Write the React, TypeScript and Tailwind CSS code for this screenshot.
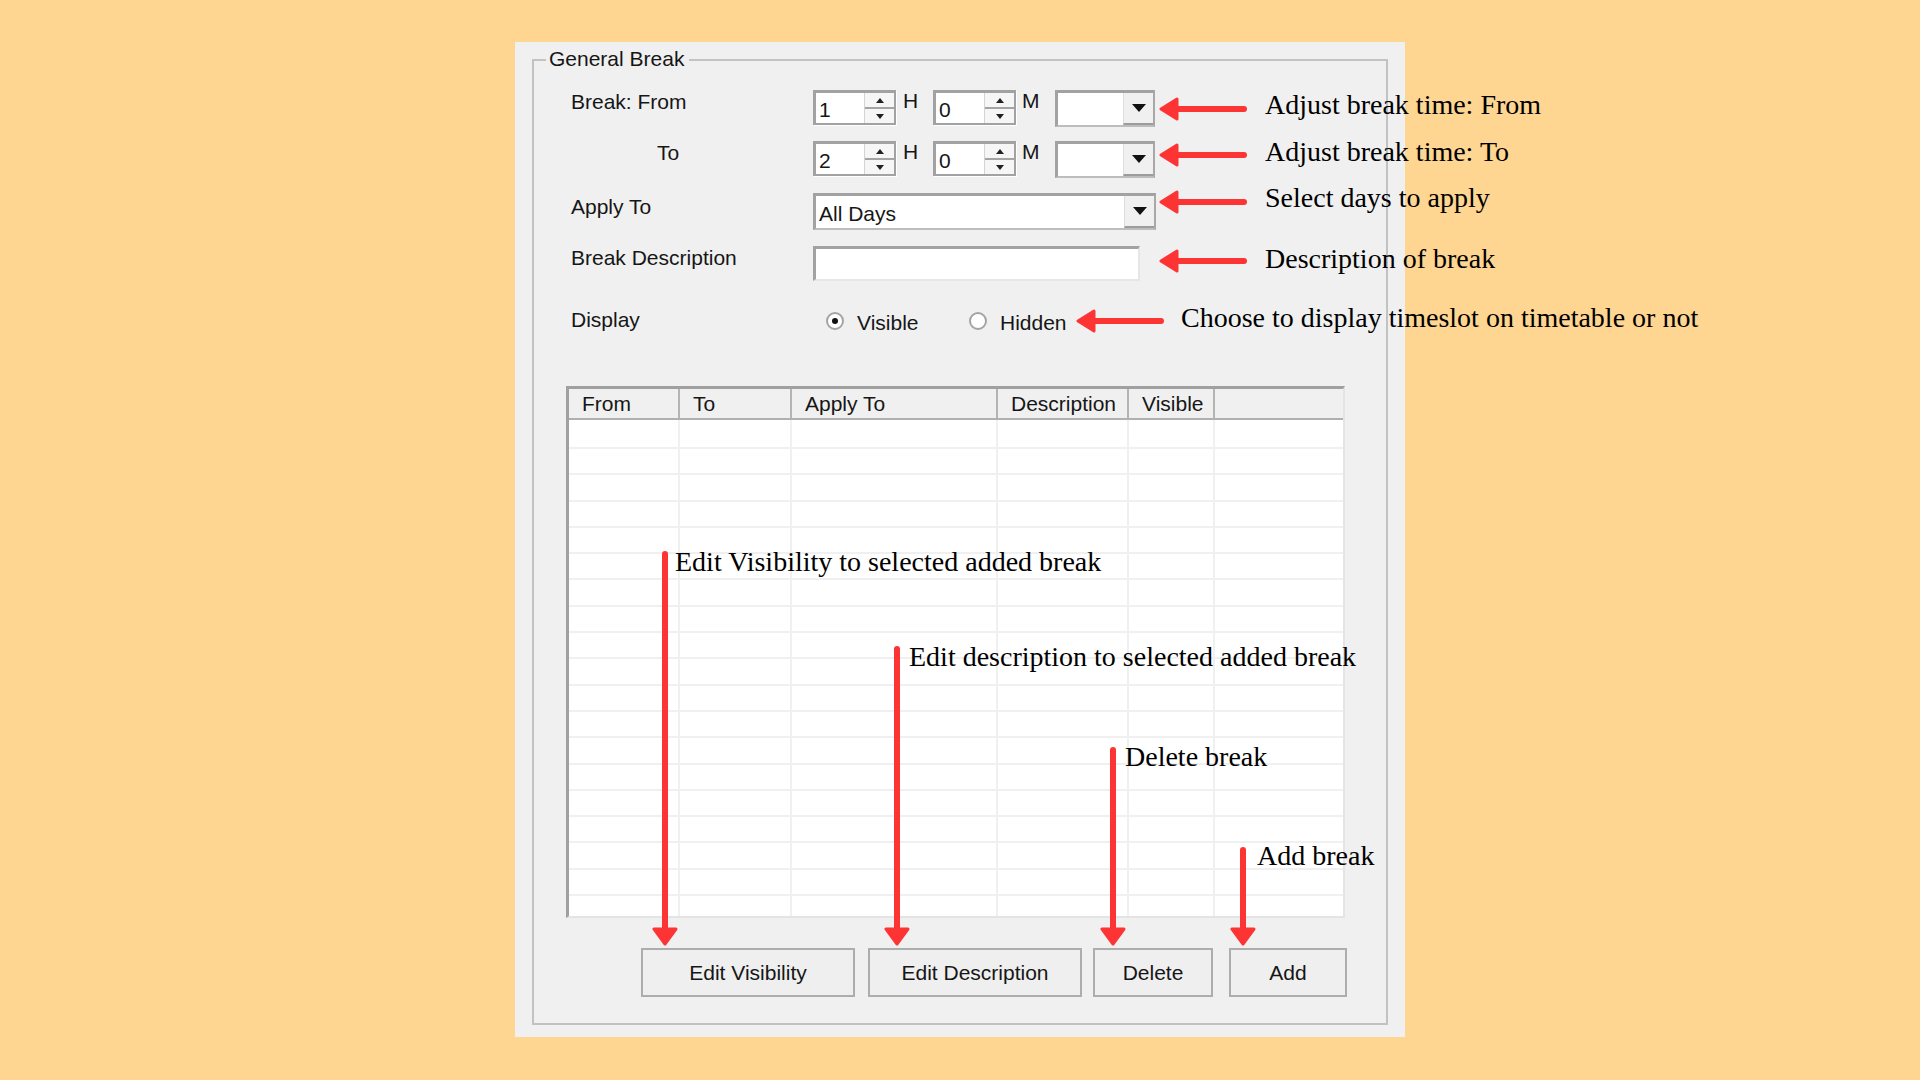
import React from 'react';

const RED = '#fd3434';

function HArrow({ x, y }: { x: number; y: number }) {
  // tip on the left, tail on the right
  return (
    <svg className="absolute" style={{ left: x, top: y - 13 }} width="90" height="26" viewBox="0 0 90 26">
      <line x1="14" y1="13" x2="85" y2="13" stroke={RED} strokeWidth="6" strokeLinecap="round" />
      <path d="M2 13 L18 3 L18 23 Z" fill={RED} stroke={RED} strokeWidth="3" strokeLinejoin="round" />
    </svg>
  );
}

function VArrow({ x, top, tip }: { x: number; top: number; tip: number }) {
  const h = tip - top;
  return (
    <svg className="absolute" style={{ left: x - 13, top }} width="26" height={h} viewBox={`0 0 26 ${h}`}>
      <line x1="13" y1="3" x2="13" y2={h - 12} stroke={RED} strokeWidth="6" strokeLinecap="round" />
      <path d={`M13 ${h - 2} L2 ${h - 17} L24 ${h - 17} Z`} fill={RED} stroke={RED} strokeWidth="3" strokeLinejoin="round" />
    </svg>
  );
}

function Note({ x, top, children }: { x: number; top: number; children: React.ReactNode }) {
  return (
    <div
      className="absolute whitespace-nowrap font-['Liberation_Serif','Times_New_Roman',serif] text-[28px] leading-[32px] text-black"
      style={{ left: x, top }}
    >
      {children}
    </div>
  );
}

function Spinner({ value }: { value: string }) {
  return (
    <div className="flex w-[83px] h-[35px] bg-white border-[3px] border-r-2 border-b-2 border-[#a2a2a2] shadow-[1px_1px_0_#ffffff]">
      <div className="flex-1 pl-[3px] pt-[5px] text-[21px] leading-[24px]">{value}</div>
      <div className="w-[30px] flex flex-col bg-[#f6f6f6] border-l border-[#d4d4d4]">
        <div className="flex-1 flex items-center justify-center border-b-2 border-[#a4a4a4]">
          <svg width="8" height="5" viewBox="0 0 8 5"><path d="M4 0 L8 5 L0 5 Z" fill="#222" /></svg>
        </div>
        <div className="flex-1 flex items-center justify-center">
          <svg width="8" height="5" viewBox="0 0 8 5"><path d="M0 0 L8 0 L4 5 Z" fill="#222" /></svg>
        </div>
      </div>
    </div>
  );
}

function Combo({ width, text }: { width: string; text?: string }) {
  return (
    <div className={`flex ${width} h-[37px] bg-white border-t-[3px] border-l-[3px] border-r-2 border-b-2 border-t-[#a2a2a2] border-l-[#a2a2a2] border-r-[#a8a8a8] border-b-[#bdbdbd]`}>
      <div className="flex-1 pl-[3px] pt-[6px] text-[21px] leading-[24px]">{text}</div>
      <div className="w-[30px] flex items-center justify-center bg-[#f0f0f0] border-b-2 border-l border-b-[#9c9c9c] border-l-[#dedede]">
        <svg width="14" height="8" viewBox="0 0 14 8"><path d="M0 0 L14 0 L7 8 Z" fill="#111" /></svg>
      </div>
    </div>
  );
}

function Radio({ checked, label, width }: { checked?: boolean; label: string; width: string }) {
  return (
    <div className={`flex items-start ${width}`}>
      <div className="mt-[4px] w-[18px] h-[18px] rounded-full border-2 border-[#a4a4a4] bg-white flex items-center justify-center">
        {checked && <div className="w-[6px] h-[6px] rounded-full bg-[#111]" />}
      </div>
      <span className="ml-[13px] mt-[3px] text-[21px] leading-[24px]">{label}</span>
    </div>
  );
}

const COLS = [
  { label: 'From', w: 'w-[111px]' },
  { label: 'To', w: 'w-[112px]' },
  { label: 'Apply To', w: 'w-[206px]' },
  { label: 'Description', w: 'w-[131px]' },
  { label: 'Visible', w: 'w-[86px]' },
];

function BreakTable() {
  const rows = Array.from({ length: 19 }, (_, i) => i);
  return (
    <div className="ml-[32px] w-[779px] h-[532px] bg-white overflow-hidden border-t-[3px] border-l-[3px] border-r-2 border-b-2 border-t-[#a0a0a0] border-l-[#a0a0a0] border-r-[#e4e4e4] border-b-[#e4e4e4]">
      <div className="flex h-[31px] bg-[#f0f0f0] border-b-2 border-[#b0b0b0]">
        {COLS.map((c) => (
          <div key={c.label} className={`${c.w} h-full pl-[13px] pt-[3px] text-[21px] leading-[24px] border-r-2 border-[#b4b4b4]`}>
            {c.label}
          </div>
        ))}
        <div className="flex-1" />
      </div>
      {rows.map((r) => (
        <div key={r} className={`flex ${r === 0 ? 'h-[29px]' : 'h-[26.3px]'} border-b-2 border-[#f0f0f0]`}>
          {COLS.map((c) => (
            <div key={c.label} className={`${c.w} h-full border-r-2 border-[#f0f0f0]`} />
          ))}
          <div className="flex-1" />
        </div>
      ))}
    </div>
  );
}

function Button({ width, label, className = '' }: { width: string; label: string; className?: string }) {
  return (
    <div className={`${width} h-[49px] flex items-center justify-center bg-[#efefef] border-2 border-[#adadad] text-[21px] leading-[24px] ${className}`}>
      {label}
    </div>
  );
}

export default function App() {
  return (
    <div className="relative w-[1920px] h-[1080px] overflow-hidden bg-[#ffd592] pl-[515px] pt-[42px] font-['Liberation_Sans',Arial,sans-serif] text-[#161616]">
      {/* dialog panel */}
      <div className="w-[890px] h-[995px] bg-[#f0f0f0] pl-[17px] pt-[17px]">
        <div className="relative w-[856px] h-[966px] border-2 border-[#c2c2c2]">
          <div className="absolute left-[12px] top-[-14px] pl-[3px] pr-[5px] bg-[#f0f0f0] text-[21px] leading-[24px]">General Break</div>

          {/* Break: From */}
          <div className="mt-[29px] flex items-start h-[37px]">
            <div className="w-[279px] pl-[37px] text-[21px] leading-[24px]">Break: From</div>
            <Spinner value="1" />
            <div className="w-[37px] pl-[7px] -mt-[1px] text-[21px] leading-[24px]">H</div>
            <Spinner value="0" />
            <div className="w-[39px] pl-[6px] -mt-[1px] text-[21px] leading-[24px]">M</div>
            <Combo width="w-[100px]" />
          </div>

          {/* To */}
          <div className="mt-[14px] flex items-start h-[37px]">
            <div className="w-[279px] pl-[123px] text-[21px] leading-[24px]">To</div>
            <Spinner value="2" />
            <div className="w-[37px] pl-[7px] -mt-[1px] text-[21px] leading-[24px]">H</div>
            <Spinner value="0" />
            <div className="w-[39px] pl-[6px] -mt-[1px] text-[21px] leading-[24px]">M</div>
            <Combo width="w-[100px]" />
          </div>

          {/* Apply To */}
          <div className="mt-[15px] flex items-start h-[37px]">
            <div className="w-[279px] pl-[37px] mt-[2px] text-[21px] leading-[24px]">Apply To</div>
            <Combo width="w-[343px]" text="All Days" />
          </div>

          {/* Break Description */}
          <div className="mt-[16px] flex items-start h-[35px]">
            <div className="w-[279px] pl-[37px] text-[21px] leading-[24px]">Break Description</div>
            <div className="w-[327px] h-[35px] bg-white border-t-[3px] border-l-[3px] border-r-2 border-b-2 border-t-[#a2a2a2] border-l-[#a2a2a2] border-r-[#e6e6e6] border-b-[#e6e6e6]" />
          </div>

          {/* Display */}
          <div className="mt-[27px] flex items-start h-[26px]">
            <div className="w-[292px] pl-[37px] text-[21px] leading-[24px]">Display</div>
            <Radio checked label="Visible" width="w-[143px]" />
            <Radio label="Hidden" width="w-[120px]" />
          </div>

          <div className="mt-[52px]">
            <BreakTable />
          </div>

          <div className="mt-[30px] flex pl-[107px]">
            <Button width="w-[214px]" label="Edit Visibility" />
            <Button width="w-[214px]" label="Edit Description" className="ml-[13px]" />
            <Button width="w-[120px]" label="Delete" className="ml-[11px]" />
            <Button width="w-[118px]" label="Add" className="ml-[16px]" />
          </div>
        </div>
      </div>

      {/* annotations laid over the dialog */}
      <div className="absolute inset-0 pointer-events-none">
        <HArrow x={1159} y={109} />
        <HArrow x={1159} y={155} />
        <HArrow x={1159} y={202} />
        <HArrow x={1159} y={261} />
        <HArrow x={1076} y={321} />
        <Note x={1265} top={89}>Adjust break time: From</Note>
        <Note x={1265} top={136}>Adjust break time: To</Note>
        <Note x={1265} top={182}>Select days to apply</Note>
        <Note x={1265} top={243}>Description of break</Note>
        <Note x={1181} top={302}>Choose to display timeslot on timetable or not</Note>

        <VArrow x={665} top={551} tip={946} />
        <VArrow x={897} top={646} tip={946} />
        <VArrow x={1113} top={747} tip={946} />
        <VArrow x={1243} top={847} tip={946} />
        <Note x={675} top={546}>Edit Visibility to selected added break</Note>
        <Note x={909} top={641}>Edit description to selected added break</Note>
        <Note x={1125} top={741}>Delete break</Note>
        <Note x={1257} top={840}>Add break</Note>
      </div>
    </div>
  );
}
